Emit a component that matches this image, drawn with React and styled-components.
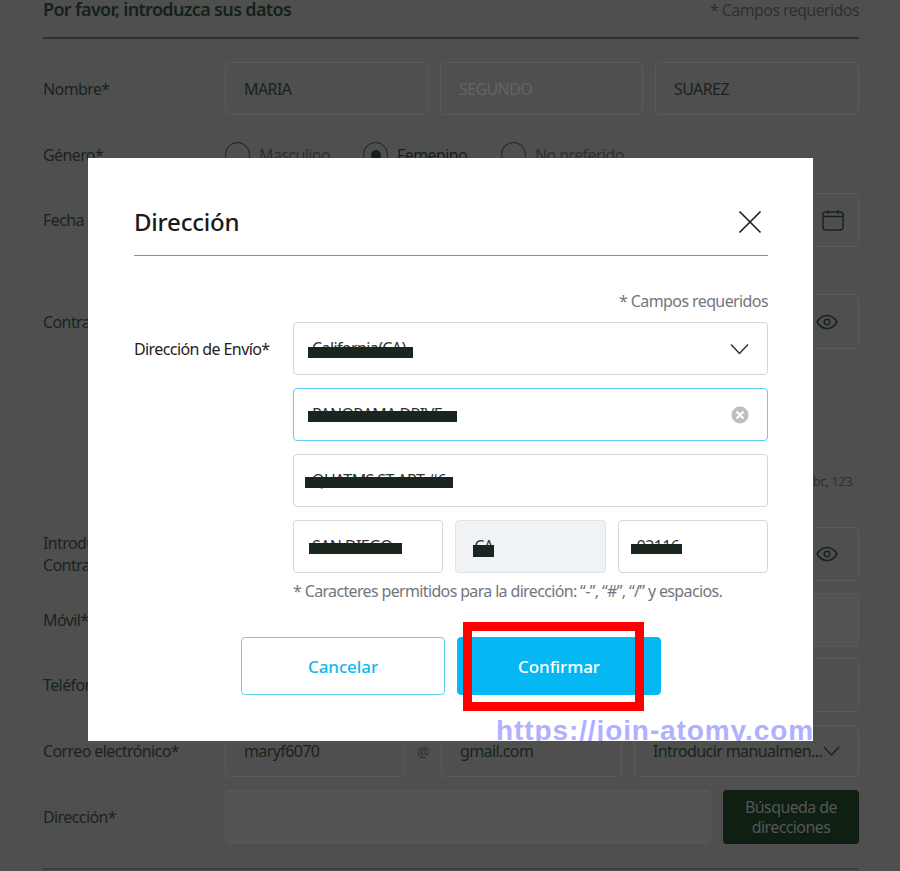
import styled, { createGlobalStyle } from "styled-components";

const GlobalStyle = createGlobalStyle`
  html, body {
    margin: 0;
    padding: 0;
    height: 100%;
    background: #4f4f4f;
    overflow: hidden;
  }
  * { box-sizing: border-box; }
  body {
    font-family: "Noto Sans", sans-serif;
    letter-spacing: -0.6px;
  }
`;

const Page = styled.div`
  position: relative;
  width: 900px;
  height: 871px;
  overflow: hidden;
`;

const Form = styled.div`
  padding: 0 41px 0 43px;
  color: #18241b;
  font-size: 16px;
`;

const FormHead = styled.div`
  display: flex;
  justify-content: space-between;
  height: 39px;
  border-bottom: 2px solid #2e2e2e;
  line-height: 20px;
`;

const FormTitle = styled.div`
  font-size: 18px;
  line-height: 19px;
  font-weight: 600;
  letter-spacing: -0.66px;
  color: #14221a;
`;

const Required = styled.div`
  color: #2f2f2f;
`;

const Row = styled.div`
  display: flex;
  align-items: center;
  margin-top: ${(p) => p.$top}px;
  height: ${(p) => p.$height || 54}px;
`;

const Label = styled.div`
  flex: 0 0 182px;
  line-height: 22px;
  white-space: nowrap;
`;

const Fields = styled.div`
  flex: 1;
  display: flex;
  align-items: center;
  gap: 12px;
  height: 100%;
`;

const Box = styled.div`
  flex: ${(p) => (p.$width ? `0 0 ${p.$width}px` : "1")};
  display: flex;
  align-items: center;
  justify-content: space-between;
  height: 100%;
  min-width: 0;
  padding: 0 ${(p) => p.$right || 18}px 0 18px;
  border: 1px solid #595959;
  border-radius: 4px;
  background: ${(p) => (p.$disabled ? "#545454" : "transparent")};
  color: ${(p) => (p.$muted ? "#636363" : "#18241b")};
  white-space: nowrap;
`;

const At = styled.span`
  flex: 0 0 11px;
  color: #2f2f2f;
  font-size: 14px;
`;

const Radios = styled.div`
  display: flex;
  align-items: center;
  width: 100%;
`;

const RadioItem = styled.div`
  display: flex;
  align-items: center;
  gap: 9px;
  width: 138px;
  color: ${(p) => (p.$on ? "#14221a" : "#2f2f2f")};
`;

const RadioMark = styled.span`
  display: flex;
  align-items: center;
  justify-content: center;
  width: 25px;
  height: 25px;
  border: 1px solid #18241b;
  border-radius: 50%;

  &::after {
    content: "";
    display: ${(p) => (p.$on ? "block" : "none")};
    width: 10px;
    height: 10px;
    border-radius: 50%;
    background: #14221a;
  }
`;

const Helper = styled.div`
  margin-top: 127px;
  height: 10px;
  line-height: 10px;
  text-align: right;
  padding-right: 7px;
  font-size: 13px;
  color: #2f2f2f;
`;

const SearchButton = styled.div`
  flex: 0 0 136px;
  height: 100%;
  display: flex;
  align-items: center;
  justify-content: center;
  text-align: center;
  padding: 0 16px;
  border-radius: 4px;
  background: #0f1f12;
  color: #565656;
  line-height: 20px;
`;

const BottomRule = styled.div`
  margin-top: 24px;
  border-top: 2px solid #3c3c3c;
`;

const Modal = styled.div`
  position: absolute;
  left: 88px;
  top: 158px;
  width: 725px;
  height: 583px;
  padding: 0 45px 0 46px;
  overflow: hidden;
  background: #fff;
  color: #1e1e1e;
`;

const ModalHead = styled.div`
  display: flex;
  align-items: center;
  justify-content: space-between;
  height: 98px;
  padding: 30px 6px 0 0;
  border-bottom: 1px solid #909090;
`;

const ModalTitle = styled.h2`
  margin: 0;
  font-size: 24px;
  font-weight: 500;
  letter-spacing: -0.2px;
  color: #1b1b1b;
`;

const ModalRequired = styled.div`
  margin-top: 35px;
  height: 20px;
  line-height: 20px;
  text-align: right;
  color: #73767c;
  font-size: 16px;
`;

const AddressRow = styled.div`
  display: flex;
  margin-top: 11px;
`;

const AddressLabel = styled.div`
  flex: 0 0 159px;
  padding-top: 16px;
  line-height: 22px;
  font-size: 16px;
  color: #222;
  white-space: nowrap;
`;

const AddressFields = styled.div`
  flex: 1;
  display: flex;
  flex-direction: column;
  gap: 13px;
`;

const AddressBox = styled.div`
  display: flex;
  align-items: center;
  justify-content: space-between;
  height: 53px;
  padding: 0 18px;
  border: 1px solid ${(p) => (p.$focus ? "#5ccdf5" : p.$readonly ? "#dfe3e6" : "#d5d7d9")};
  border-radius: 4px;
  background: ${(p) => (p.$readonly ? "#eff3f5" : "#fff")};
  font-size: 16px;
  color: #333;
`;

const AddressLine = styled.div`
  display: flex;
  gap: 12px;

  ${AddressBox} {
    flex: 1;
  }
`;

/* the redaction bar lies over the typed value */
const Redacted = styled.span`
  position: relative;
  white-space: nowrap;
  transform: translateY(-1px);

  &::after {
    content: "";
    position: absolute;
    left: ${(p) => p.$left}px;
    top: ${(p) => p.$top}px;
    width: ${(p) => p.$width}px;
    height: ${(p) => p.$height}px;
    background: #1a251d;
  }
`;

const Note = styled.div`
  margin-top: -6px;
  line-height: 22px;
  font-size: 16px;
  letter-spacing: -0.65px;
  color: #73767c;
  white-space: nowrap;
`;

const Actions = styled.div`
  display: flex;
  justify-content: center;
  gap: 12px;
  margin-top: 35px;
`;

const ActionButton = styled.button`
  width: 204px;
  height: 58px;
  border: 1px solid ${(p) => (p.$primary ? "#05b7f2" : "#62cff5")};
  border-radius: 4px;
  background: ${(p) => (p.$primary ? "#05b7f2" : "#fff")};
  color: ${(p) => (p.$primary ? "#fff" : "#14b5f1")};
  font: 500 17px "Noto Sans", sans-serif;
  letter-spacing: -0.1px;
`;

const Highlight = styled.div`
  position: absolute;
  left: 463px;
  top: 622px;
  width: 181px;
  height: 89px;
  border: 9px solid #fe0000;
`;

/* stamped on the picture and cut off by the bottom of the modal */
const Watermark = styled.div`
  position: absolute;
  left: 408px;
  top: 557px;
  font: 700 28px "Liberation Sans", sans-serif;
  letter-spacing: 0.9px;
  color: #b0b0ff;
  white-space: nowrap;
`;

const Icon = styled.svg`
  flex: none;
  fill: none;
  stroke: ${(p) => p.$color || "#18241b"};
  stroke-width: ${(p) => p.$stroke || 1.5};
`;

const CalendarIcon = () => (
  <Icon width="24" height="24" viewBox="0 0 24 24">
    <rect x="2" y="4" width="20" height="18" rx="3" />
    <path d="M2 8.5h20M7 2v4M17 2v4" />
  </Icon>
);

const EyeIcon = () => (
  <Icon width="24" height="24" viewBox="0 0 24 24">
    <path d="M2 12c2.6-4.4 6-6.5 10-6.5s7.400 2.100 10 6.500c-2.600 4.400-6 6.500-10 6.500S4.600 16.400 2 12z" />
    <circle cx="12" cy="12" r="2.800" />
  </Icon>
);

const Chevron = ({ color, size = 20 }) => (
  <Icon width={size} height={size} viewBox="0 0 20 20" $color={color}>
    <path d="M2 5.500l8.500 9 8.500-9" />
  </Icon>
);

const CloseIcon = () => (
  <Icon width="24" height="24" viewBox="0 0 24 24" $color="#222" $stroke="1.700">
    <path d="M1.500 1.500l21 21M22.500 1.500l-21 21" />
  </Icon>
);

const ClearIcon = () => (
  <svg width="18" height="18" viewBox="0 0 18 18">
    <circle cx="9" cy="9" r="8.500" fill="#c2bdb8" />
    <path d="M5.500 5.500l7 7M12.500 5.500l-7 7" stroke="#fff" strokeWidth="2" />
  </svg>
);

export default function App() {
  return (
    <Page>
      <GlobalStyle />
      <Form>
        <FormHead>
          <FormTitle>Por favor, introduzca sus datos</FormTitle>
          <Required>* Campos requeridos</Required>
        </FormHead>
        <Row $top={23} $height={53}>
          <Label>Nombre*</Label>
          <Fields>
            <Box $width={203}>MARIA</Box>
            <Box $width={203} $muted>SEGUNDO</Box>
            <Box>SUAREZ</Box>
          </Fields>
        </Row>
        <Row $top={27} $height={25}>
          <Label>Género*</Label>
          <Radios>
            <RadioItem><RadioMark />Masculino</RadioItem>
            <RadioItem $on><RadioMark $on />Femenino</RadioItem>
            <RadioItem><RadioMark />No preferido</RadioItem>
          </Radios>
        </Row>
        <Row $top={26}>
          <Label>Fecha de nacimiento*</Label>
          <Fields>
            <Box $right={13}>
              <span />
              <CalendarIcon />
            </Box>
          </Fields>
        </Row>
        <Row $top={47} $height={55}>
          <Label>Contraseña*</Label>
          <Fields>
            <Box $right={19}>
              <span />
              <EyeIcon />
            </Box>
          </Fields>
        </Row>
        <Helper>abc, 123</Helper>
        <Row $top={41} $height={54}>
          <Label>Introducir<br />Contraseña*</Label>
          <Fields>
            <Box $right={19}>
              <span />
              <EyeIcon />
            </Box>
          </Fields>
        </Row>
        <Row $top={12}>
          <Label>Móvil*</Label>
          <Fields>
            <Box $disabled />
          </Fields>
        </Row>
        <Row $top={11}>
          <Label>Teléfono</Label>
          <Fields>
            <Box />
          </Fields>
        </Row>
        <Row $top={13} $height={52}>
          <Label>Correo electrónico*</Label>
          <Fields>
            <Box $width={180}>maryf6070</Box>
            <At>@</At>
            <Box $width={181}>gmail.com</Box>
            <Box>
              Introducir manualmen...
              <Chevron size={18} />
            </Box>
          </Fields>
        </Row>
        <Row $top={13}>
          <Label>Dirección*</Label>
          <Fields>
            <Box $disabled />
            <SearchButton>Búsqueda de direcciones</SearchButton>
          </Fields>
        </Row>
        <BottomRule />
      </Form>

      <Modal>
        <ModalHead>
          <ModalTitle>Dirección</ModalTitle>
          <CloseIcon />
        </ModalHead>
        <ModalRequired>* Campos requeridos</ModalRequired>
        <AddressRow>
          <AddressLabel>Dirección de Envío*</AddressLabel>
          <AddressFields>
            <AddressBox>
              <Redacted $left={-4} $top={10} $width={105} $height={11}>California(CA)</Redacted>
              <Chevron color="#333" />
            </AddressBox>
            <AddressBox $focus>
              <Redacted $left={-4} $top={8} $width={149} $height={11}>PANORAMA DRIVE</Redacted>
              <ClearIcon />
            </AddressBox>
            <AddressBox>
              <Redacted $left={-7} $top={8} $width={148} $height={11}>QUATMS ST APT #6</Redacted>
            </AddressBox>
            <AddressLine>
              <AddressBox>
                <Redacted $left={-3} $top={8} $width={93} $height={11}>SAN DIEGO</Redacted>
              </AddressBox>
              <AddressBox $readonly>
                <Redacted $left={-1} $top={10} $width={21} $height={12}>CA</Redacted>
              </AddressBox>
              <AddressBox>
                <Redacted $left={-6} $top={9} $width={51} $height={10}>92116</Redacted>
              </AddressBox>
            </AddressLine>
            <Note>* Caracteres permitidos para la dirección: “-”, “#”, “/” y espacios.</Note>
          </AddressFields>
        </AddressRow>
        <Actions>
          <ActionButton>Cancelar</ActionButton>
          <ActionButton $primary>Confirmar</ActionButton>
        </Actions>
        <Watermark>https://join-atomy.com</Watermark>
      </Modal>
      <Highlight />
    </Page>
  );
}
